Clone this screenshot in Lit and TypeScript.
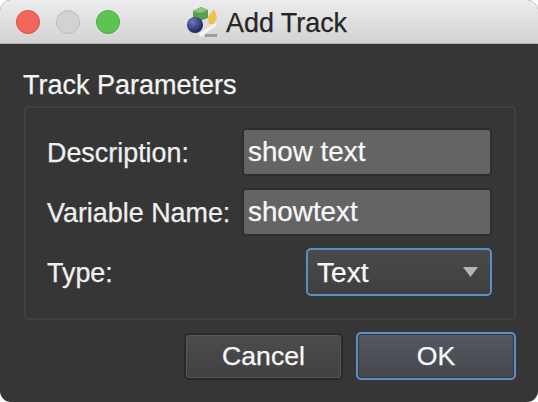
import { LitElement, html, css } from "lit";
import { customElement } from "lit/decorators.js";

@customElement("app-root")
export class AppRoot extends LitElement {
  static styles = css`
    :host { display: block; width: 538px; height: 402px; background: #fff; font-family: "Liberation Sans", Arial, sans-serif; }
    .win { width: 538px; height: 402px; box-sizing: border-box; border-radius: 11px; overflow: hidden; background: #363636; display: flex; flex-direction: column; -webkit-text-stroke: 0.25px; }
    .bar { height: 44px; box-sizing: border-box; flex: none; display: flex; align-items: center; padding-left: 16px; background: linear-gradient(#ececec, #d3d3d3); border-bottom: 1px solid #b4b4b4; }
    .lights { display: flex; gap: 16px; }
    .light { width: 24px; height: 24px; box-sizing: border-box; border-radius: 50%; border: 1px solid; }
    .red { background: #f2665c; border-color: #dc4f45; }
    .grey { background: #d2d2d2; border-color: #bcbcbc; }
    .green { background: #5cc452; border-color: #4aab41; }
    .title { display: flex; align-items: center; gap: 5px; margin-left: 67px; font-size: 26.9px; color: #262626; }
    .title span { padding-top: 3px; }
    .body { flex: 1; padding: 26px 22px 22px 22px; display: flex; flex-direction: column; }
    .heading { font-size: 27px; line-height: 30px; color: #f4f4f4; margin-left: 1px; }
    .group { margin-top: 6px; height: 214px; box-sizing: border-box; margin-left: 2px; border: 2px solid #404040; border-radius: 4px; padding: 20px 22px 0 21px; display: flex; flex-direction: column; gap: 12px; }
    .row { display: flex; align-items: center; justify-content: space-between; height: 48px; font-size: 26.9px; color: #f0f0f0; }
    .label { padding-top: 2px; }
    .field { width: 250px; height: 48px; box-sizing: border-box; border-radius: 4px; background: #646464; border: 2px solid #2e2e2e; padding-left: 4px; line-height: 44px; color: #f8f8f8; font-size: 27.8px; }
    .combo { width: 186px; height: 48px; box-sizing: border-box; border-radius: 5px; border: 2px solid #5d8ec8; background: linear-gradient(#4a4a4a, #3f3f3f); padding: 0 12px 0 9px; display: flex; align-items: center; justify-content: space-between; color: #f8f8f8; font-size: 28.2px; }
    .arrow { width: 15px; height: 10px; }
    .buttons { display: flex; justify-content: flex-end; align-items: center; gap: 13px; margin-top: 12px; }
    .btn { box-sizing: border-box; display: flex; align-items: center; justify-content: center; border-radius: 5px; font-size: 26.6px; color: #f8f8f8; }
    .cancel { width: 159px; height: 47px; border: 2px solid #2a2a2a; background: linear-gradient(#4c4c4c, #414141); box-shadow: inset 0 0 0 1px #555; }
    .ok { width: 160px; height: 48px; border: 2px solid #5d8ec8; background: linear-gradient(#545861, #44474d); box-shadow: inset 0 0 0 1px #33363b; }
  `;

  render() {
    return html`<div class="win">
      <div class="bar">
        <div class="lights">
          <div class="light red"></div><div class="light grey"></div><div class="light green"></div>
        </div>
        <div class="title">
          <svg width="34" height="34" viewBox="0 0 34 34">
            <defs>
              <radialGradient id="b" cx="0.35" cy="0.3" r="0.8"><stop offset="0" stop-color="#6a78c0"/><stop offset="1" stop-color="#101a50"/></radialGradient>
            </defs>
            <path d="M6 6 L14 2 L21 5 L21 13 L13 16 L6 13 Z" fill="#5aa050"/>
            <path d="M6 6 L14 2 L21 5 L13 8 Z" fill="#8cc47a"/>
            <path d="M21 12 L27 4 L30 12 L27 19 L22 19 Z" fill="#f1c04a"/>
            <path d="M11 29 L28 18 L30 20 L14 32 Z" fill="#f4f4f4"/>
            <rect x="18" y="29" width="12" height="3" fill="#9c9c9c"/>
            <circle cx="8" cy="20" r="8" fill="url(#b)"/>
          </svg>
          <span>Add Track</span>
        </div>
      </div>
      <div class="body">
        <div class="heading">Track Parameters</div>
        <div class="group">
          <div class="row"><span class="label">Description:</span><div class="field">show text</div></div>
          <div class="row"><span class="label">Variable Name:</span><div class="field">showtext</div></div>
          <div class="row"><span class="label">Type:</span>
            <div class="combo"><span>Text</span>
              <svg class="arrow" viewBox="0 0 15 10"><path d="M0 0 H15 L7.5 10 Z" fill="#b4b4b4"/></svg>
            </div>
          </div>
        </div>
        <div class="buttons">
          <div class="btn cancel">Cancel</div>
          <div class="btn ok">OK</div>
        </div>
      </div>
    </div>`;
  }
}
